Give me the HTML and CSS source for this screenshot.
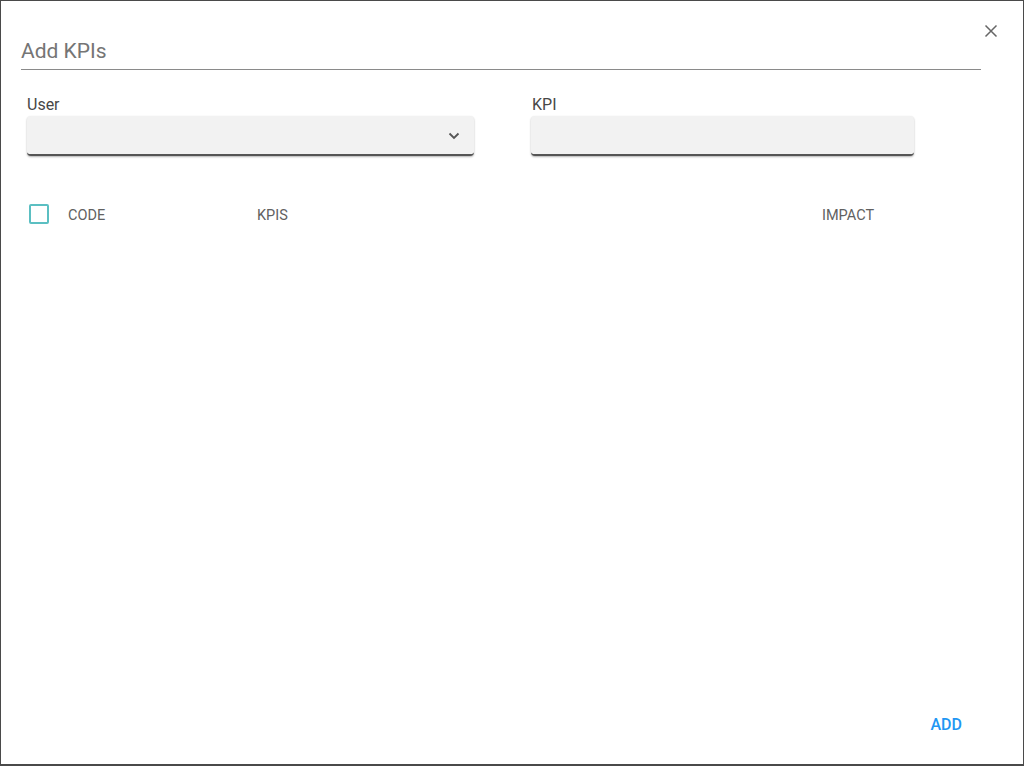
FILE: index.html
```html
<!DOCTYPE html>
<html lang="en">
<head>
    <meta charset="UTF-8">
    <meta name="viewport" content="width=device-width, initial-scale=1.0">
    <title>Add KPIs</title>
    <link rel="stylesheet" href="styles.css">
</head>
<body>
    <div class="dialog">
        <div class="dialog-head">
            <h2 class="dialog-title">Add KPIs</h2>
            <button class="close-btn" type="button" aria-label="Close">
                <svg width="14" height="14" viewBox="0 0 14 14">
                    <path d="M1.5 1.5 L12.5 12.5 M12.5 1.5 L1.5 12.5" stroke="#666" stroke-width="1.5" fill="none"/>
                </svg>
            </button>
        </div>

        <div class="fields">
            <div class="field field-user">
                <label for="user">User</label>
                <div class="select-box" id="user">
                    <svg class="chevron" width="12" height="8" viewBox="0 0 12 8">
                        <path d="M1.5 1.5 L6 6 L10.5 1.5" stroke="#555" stroke-width="1.8" fill="none"/>
                    </svg>
                </div>
            </div>
            <div class="field field-kpi">
                <label for="kpi">KPI</label>
                <input type="text" id="kpi" class="text-box">
            </div>
        </div>

        <div class="table-head">
            <span class="check"></span>
            <span class="col col-code">CODE</span>
            <span class="col col-kpis">KPIS</span>
            <span class="col col-impact">IMPACT</span>
        </div>

        <div class="dialog-foot">
            <button class="add-btn" type="button">ADD</button>
        </div>
    </div>
</body>
</html>
```

FILE: styles.css
```css
body {
    margin: 0;
    padding: 0;
    font-family: Roboto, "Liberation Sans", Arial, sans-serif;
    background: white;
}
.dialog {
    box-sizing: border-box;
    height: 766px;
    border: 1px solid #4a4a4a;
    border-bottom-width: 2px;
    display: flex;
    flex-direction: column;
}
.dialog-head {
    display: flex;
    align-items: flex-start;
    padding: 0 25px 0 20px;
}
.dialog-title {
    flex: 1;
    margin: 36px 0 0 0;
    padding-bottom: 4px;
    border-bottom: 1px solid #8a8a8a;
    font-size: 21px;
    font-weight: 400;
    line-height: 28px;
    color: #757575;
}
.close-btn {
    background: none;
    border: none;
    padding: 0;
    margin: 23px 0 0 3px;
    width: 14px;
    height: 14px;
    cursor: pointer;
}
.close-btn svg {
    display: block;
}
.fields {
    display: flex;
    padding: 25px 0 0 25px;
    gap: 57px;
}
.field label {
    display: block;
    font-size: 16px;
    line-height: 20px;
    color: #474747;
    margin-bottom: 1px;
}
.field-user {
    width: 447px;
    margin-left: 1px;
}
.field-kpi {
    width: 383px;
}
.field-kpi label {
    padding-left: 1px;
}
.select-box, .text-box {
    box-sizing: border-box;
    width: 100%;
    height: 40px;
    margin: 0;
    background: #f2f2f2;
    border: none;
    border-bottom: 2px solid #555;
    border-radius: 4px;
    box-shadow: 0 1px 2px rgba(0, 0, 0, 0.3);
    font-size: 16px;
}
.select-box {
    display: flex;
    align-items: center;
    justify-content: flex-end;
    padding-right: 14px;
}
.chevron {
    display: block;
    margin-top: 1px;
}
.table-head {
    display: flex;
    align-items: center;
    padding: 50px 0 0 28px;
    font-size: 14.5px;
    color: #616161;
}
.check {
    box-sizing: border-box;
    width: 20px;
    height: 20px;
    margin-top: -2px;
    border: 2px solid #5bbfc2;
    border-radius: 2px;
    margin-right: 19px;
}
.col-code {
    width: 189px;
}
.col-kpis {
    width: 565px;
}
.dialog-foot {
    margin-top: auto;
    display: flex;
    justify-content: flex-end;
    padding: 0 45px 23px 0;
}
.add-btn {
    background: none;
    border: none;
    padding: 6px 16px;
    font-family: inherit;
    font-size: 16px;
    line-height: 20px;
    font-weight: 500;
    color: #2196f3;
    cursor: pointer;
}
```
